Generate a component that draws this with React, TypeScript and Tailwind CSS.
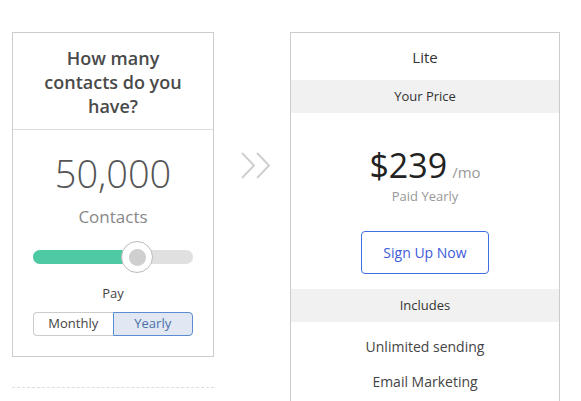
import { useState } from 'react'

const features = ['Unlimited sending', 'Email Marketing', 'Marketing Automation']

export default function App() {
  const [billing, setBilling] = useState<'monthly' | 'yearly'>('yearly')
  const value = 65

  return (
    <div className="min-h-screen bg-white font-['Open_Sans',sans-serif] text-[#444]">
      <div className="flex items-start pl-3 pt-8">
        {/* contacts picker */}
        <div className="w-[202px] shrink-0">
          <div className="border border-[#ccc]">
            <div className="border-b border-[#ddd] px-6 pt-[13px] pb-[11px] text-center text-[18px] leading-6 font-semibold text-[#4a4a4a]">
              How many contacts do you have?
            </div>
            <div className="px-5 pt-5 pb-5 text-center">
              <p className="text-[38px] leading-[46px] font-light text-[#555]">50,000</p>
              <p className="mt-[9px] text-[17px] leading-6 text-[#888]">Contacts</p>

              <div className="relative mt-3 h-8">
                <div className="absolute top-[9px] left-0 right-0 h-[14px] rounded-full bg-[#e0e0e0]" />
                <div
                  className="absolute top-[9px] left-0 h-[14px] rounded-l-full bg-[#4dc9a4]"
                  style={{ width: `${value}%` }}
                />
                <div
                  className="absolute top-0 flex h-8 w-8 -translate-x-1/2 items-center justify-center rounded-full border border-[#bbb] bg-white"
                  style={{ left: `${value}%` }}
                >
                  <div className="h-[17px] w-[17px] rounded-full bg-[#cfcfcf]" />
                </div>
              </div>

              <p className="mt-[11px] text-[13px] leading-[18px] text-[#444]">Pay</p>
              <div className="mt-[10px] flex h-6 text-[13px]">
                <button
                  onClick={() => setBilling('monthly')}
                  className={`flex-1 rounded-l border ${billing === 'monthly' ? 'border-[#5b8bd1] bg-[#e1e8f3] text-[#4a6ea8]' : 'border-[#ccc] border-r-0 text-[#444]'}`}
                >
                  Monthly
                </button>
                <button
                  onClick={() => setBilling('yearly')}
                  className={`flex-1 rounded-r border ${billing === 'yearly' ? 'border-[#5b8bd1] bg-[#e1e8f3] text-[#4a6ea8]' : 'border-[#ccc] border-l-0 text-[#444]'}`}
                >
                  Yearly
                </button>
              </div>
            </div>
          </div>
          <div className="mt-[30px] border-t border-dashed border-[#ddd]" />
        </div>

        {/* arrow */}
        <div className="w-[76px] shrink-0 pt-[120px] pl-[26px]">
          <svg width="32" height="28" viewBox="0 0 32 28" fill="none" stroke="#cfcfcf" strokeWidth="2">
            <polyline points="2,1 14,13.5 2,26" />
            <polyline points="17,1 29,13.5 17,26" />
          </svg>
        </div>

        {/* plan card */}
        <div className="w-[270px] shrink-0 border border-[#ccc] pb-6 text-center">
          <p className="pt-[13px] text-[15px] leading-[22px] text-[#333]">Lite</p>
          <div className="mt-3 flex h-[33px] items-center justify-center bg-[#f1f1f1] text-[13px] text-[#333]">
            Your Price
          </div>
          <div className="pt-8">
            <div className="flex h-10 items-baseline justify-center">
              <span className="text-[34px] leading-10 text-[#222]">$239</span>
              <span className="ml-[5px] text-[15px] leading-10 text-[#999]">/mo</span>
            </div>
            <p className="mt-[2px] text-[13px] leading-[18px] text-[#999]">Paid Yearly</p>
            <button className="mt-[26px] h-[43px] w-32 rounded border border-[#3f6fe0] text-[14px] text-[#3d5bd8]">
              Sign Up Now
            </button>
          </div>
          <div className="mt-[15px] flex h-[33px] items-center justify-center bg-[#f1f1f1] text-[13px] text-[#333]">
            Includes
          </div>
          <ul className="mt-[15px] flex flex-col gap-[15px] text-[14px] leading-5 text-[#444]">
            {features.map((f) => (
              <li key={f}>{f}</li>
            ))}
          </ul>
        </div>
      </div>
    </div>
  )
}
